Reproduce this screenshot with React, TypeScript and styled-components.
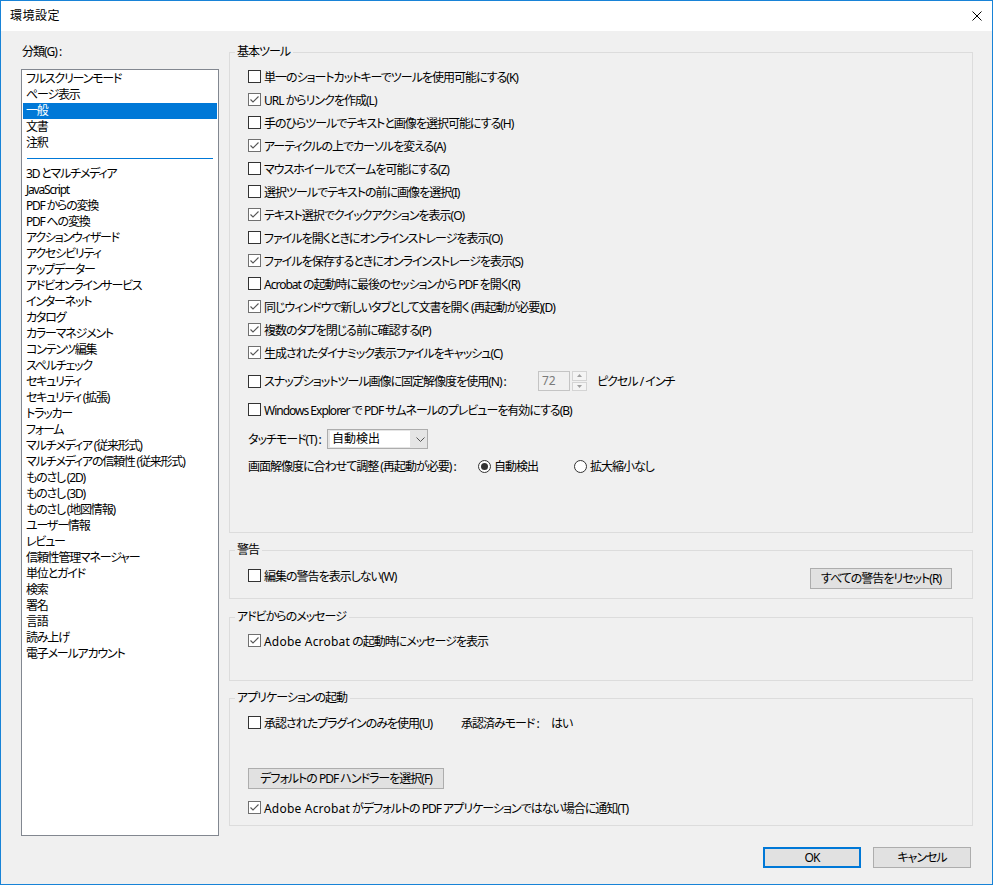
import React from "react";
import styled, { createGlobalStyle } from "styled-components";

const GlobalStyle = createGlobalStyle`
  html, body { margin: 0; padding: 0; background: #f0f0f0; }
  body {
    font-family: "Noto Sans", "Noto Sans CJK JP", sans-serif;
    font-size: 12px;
    letter-spacing: -1px;
    color: #000;
    font-feature-settings: "palt";
  }
  *, *::before, *::after { box-sizing: border-box; }
`;

const Frame = styled.div`
  width: 993px;
  height: 885px;
  border: 1px solid #1883d7;
  background: #f0f0f0;
  display: flex;
  flex-direction: column;
  overflow: hidden;
`;

const TitleBar = styled.header`
  height: 30px;
  flex: none;
  background: #fff;
  display: flex;
  align-items: center;
  justify-content: space-between;
  padding: 0 10px 0 9px;
`;

const Title = styled.h1`
  margin: 0;
  font-size: 12px;
  font-weight: normal;
  line-height: 16px;
  letter-spacing: 0.5px;
`;

const CloseButton = styled.button`
  width: 10px;
  height: 10px;
  padding: 0;
  border: 0;
  background: none;
  display: flex;
`;

const Body = styled.div`
  flex: 1;
  display: flex;
  flex-direction: column;
  padding: 13px 19px 16px 20px;
`;

const Main = styled.div`
  display: flex;
  gap: 10px;
`;

const LeftColumn = styled.div`
  width: 198px;
  flex: none;
  display: flex;
  flex-direction: column;
`;

const FieldLabel = styled.div`
  line-height: 16px;
  height: 16px;
  padding-left: 1px;
  margin-bottom: 9px;
`;

const ListBox = styled.ul`
  margin: 0;
  list-style: none;
  height: 767px;
  border: 1px solid #828790;
  background: #fff;
  padding: 1px;
`;

const ListItem = styled.li<{ $selected?: boolean }>`
  height: 16px;
  line-height: 16px;
  padding-left: 3px;
  white-space: nowrap;
  letter-spacing: -1.2px;
  background: ${(p) => (p.$selected ? "#0078d7" : "transparent")};
  color: ${(p) => (p.$selected ? "#fff" : "#000")};
`;

const ListSeparator = styled.li`
  height: 15px;
  padding: 7px 4px 0;
  &::after {
    content: "";
    display: block;
    height: 1px;
    background: #0078d7;
  }
`;

const RightColumn = styled.div`
  width: 744px;
  flex: none;
  display: flex;
  flex-direction: column;
`;

const Group = styled.fieldset<{ $gap?: number }>`
  margin: ${(p) => p.$gap ?? 0}px 0 0;
  padding: 0;
  border: 1px solid #dcdcdc;
  min-width: 0;
`;

const Legend = styled.legend`
  margin-left: 5px;
  padding: 0 3px 0 2px;
  height: 16px;
  line-height: 16px;
  font-size: 12px;
`;

const GroupBody = styled.div<{ $h: number; $pt: number }>`
  height: ${(p) => p.$h}px;
  padding: ${(p) => p.$pt}px 0 0 18px;
  display: flex;
  flex-direction: column;
`;

const Row = styled.div<{ $h?: number; $mt?: number }>`
  display: flex;
  align-items: center;
  height: ${(p) => p.$h ?? 23}px;
  margin-top: ${(p) => p.$mt ?? 0}px;
  white-space: nowrap;
`;

const SplitRow = styled.div`
  display: flex;
  justify-content: space-between;
  align-items: flex-start;
  padding-right: 20px;
`;

const CheckLabel = styled.label<{ $w?: number }>`
  display: flex;
  align-items: center;
  gap: 3px;
  height: 23px;
  white-space: nowrap;
  flex: none;
  width: ${(p) => (p.$w ? `${p.$w}px` : "auto")};
`;

const Box = styled.span<{ $checked: boolean }>`
  width: 13px;
  height: 13px;
  flex: none;
  border: 1px solid ${(p) => (p.$checked ? "#707070" : "#333")};
  background: #fff;
  display: flex;
`;

const Product = styled.span`
  letter-spacing: 0.2px;
`;

const RadioCircle = styled.span<{ $checked: boolean }>`
  width: 13px;
  height: 13px;
  flex: none;
  border-radius: 50%;
  border: 1px solid #333;
  background: #fff;
  display: flex;
  align-items: center;
  justify-content: center;
  &::after {
    content: "";
    width: 7px;
    height: 7px;
    border-radius: 50%;
    background: ${(p) => (p.$checked ? "#333" : "transparent")};
  }
`;

const RadioOption = styled.label<{ $w?: number }>`
  display: flex;
  align-items: center;
  gap: 3px;
  width: ${(p) => (p.$w ? `${p.$w}px` : "auto")};
`;

const FixedText = styled.span<{ $w: number }>`
  width: ${(p) => p.$w}px;
  flex: none;
`;

const SpinInput = styled.div`
  width: 32px;
  height: 20px;
  border: 1px solid #c4c4c4;
  background: #f0f0f0;
  color: #7a7a7a;
  padding-left: 3px;
  line-height: 18px;
  letter-spacing: 0;
`;

const SpinButtons = styled.div`
  margin-left: 2px;
  width: 15px;
  height: 20px;
  display: flex;
  flex-direction: column;
  gap: 1px;
`;

const SpinButton = styled.span`
  flex: 1;
  border: 1px solid #d4d4d4;
  background: #f4f4f4;
  display: flex;
  align-items: center;
  justify-content: center;
`;

const Unit = styled.span`
  margin-left: 10px;
`;

const Select = styled.div`
  width: 101px;
  height: 20px;
  border: 1px solid #adadad;
  background: #e5e5e5;
  display: flex;
  align-items: center;
  padding: 0 0 0 2px;
`;

const SelectValue = styled.span`
  width: 80px;
  height: 16px;
  line-height: 16px;
  background: #fff;
  padding-left: 2px;
  letter-spacing: 0;
`;

const Chevron = styled.svg`
  margin-left: 6px;
`;

const PushButton = styled.button<{ $w: number; $default?: boolean }>`
  width: ${(p) => p.$w}px;
  height: 21px;
  flex: none;
  font: inherit;
  font-size: 12px;
  letter-spacing: inherit;
  color: #000;
  background: #e1e1e1;
  border: ${(p) => (p.$default ? "2px solid #0078d7" : "1px solid #adadad")};
  padding: 0;
  line-height: 17px;
`;

const Footer = styled.div`
  margin-top: 11px;
  display: flex;
  justify-content: flex-end;
  gap: 12px;
  padding-right: 2px;
`;

function CheckBox({ checked, label, w }: { checked: boolean; label: React.ReactNode; w?: number }) {
  return (
    <CheckLabel $w={w}>
      <Box $checked={checked}>
        {checked && (
          <svg width="11" height="11" viewBox="0 0 11 11">
            <path d="M1.5 5.5 L4 8 L9.5 2.5" fill="none" stroke="#555" strokeWidth="1.1" />
          </svg>
        )}
      </Box>
      <span>{label}</span>
    </CheckLabel>
  );
}

const topItems = ["フルスクリーンモード", "ページ表示", "一般", "文書", "注釈"];
const otherItems = [
  "3D とマルチメディア",
  "JavaScript",
  "PDF からの変換",
  "PDF への変換",
  "アクションウィザード",
  "アクセシビリティ",
  "アップデーター",
  "アドビオンラインサービス",
  "インターネット",
  "カタログ",
  "カラーマネジメント",
  "コンテンツ編集",
  "スペルチェック",
  "セキュリティ",
  "セキュリティ (拡張)",
  "トラッカー",
  "フォーム",
  "マルチメディア (従来形式)",
  "マルチメディアの信頼性 (従来形式)",
  "ものさし (2D)",
  "ものさし (3D)",
  "ものさし (地図情報)",
  "ユーザー情報",
  "レビュー",
  "信頼性管理マネージャー",
  "単位とガイド",
  "検索",
  "署名",
  "言語",
  "読み上げ",
  "電子メールアカウント",
];

const basicTools: [string, boolean][] = [
  ["単一のショートカットキーでツールを使用可能にする(K)", false],
  ["URL からリンクを作成(L)", true],
  ["手のひらツールでテキストと画像を選択可能にする(H)", false],
  ["アーティクルの上でカーソルを変える(A)", true],
  ["マウスホイールでズームを可能にする(Z)", false],
  ["選択ツールでテキストの前に画像を選択(I)", false],
  ["テキスト選択でクイックアクションを表示(O)", true],
  ["ファイルを開くときにオンラインストレージを表示(O)", false],
  ["ファイルを保存するときにオンラインストレージを表示(S)", true],
  ["Acrobat の起動時に最後のセッションから PDF を開く(R)", false],
  ["同じウィンドウで新しいタブとして文書を開く (再起動が必要)(D)", true],
  ["複数のタブを閉じる前に確認する(P)", true],
  ["生成されたダイナミック表示ファイルをキャッシュ(C)", true],
];

export default function App() {
  return (
    <>
      <GlobalStyle />
      <Frame>
        <TitleBar>
          <Title>環境設定</Title>
          <CloseButton aria-label="閉じる">
            <svg width="10" height="10" viewBox="0 0 10 10">
              <path d="M0.5 0.5 L9.5 9.5 M9.5 0.5 L0.5 9.5" stroke="#000" strokeWidth="1" />
            </svg>
          </CloseButton>
        </TitleBar>
        <Body>
          <Main>
            <LeftColumn>
              <FieldLabel>分類(G) :</FieldLabel>
              <ListBox>
                {topItems.map((t) => (
                  <ListItem key={t} $selected={t === "一般"}>
                    {t}
                  </ListItem>
                ))}
                <ListSeparator />
                {otherItems.map((t) => (
                  <ListItem key={t}>{t}</ListItem>
                ))}
              </ListBox>
            </LeftColumn>
            <RightColumn>
              <Group>
                <Legend>基本ツール</Legend>
                <GroupBody $h={472} $pt={5}>
                  {basicTools.map(([label, checked]) => (
                    <Row key={label}>
                      <CheckBox checked={checked} label={label} />
                    </Row>
                  ))}
                  <Row $h={34}>
                    <CheckBox checked={false} label="スナップショットツール画像に固定解像度を使用(N) :" w={290} />
                    <SpinInput>72</SpinInput>
                    <SpinButtons>
                      <SpinButton>
                        <svg width="5" height="3" viewBox="0 0 5 3">
                          <path d="M0 3 L2.5 0 L5 3 Z" fill="#a0a0a0" />
                        </svg>
                      </SpinButton>
                      <SpinButton>
                        <svg width="5" height="3" viewBox="0 0 5 3">
                          <path d="M0 0 L2.5 3 L5 0 Z" fill="#a0a0a0" />
                        </svg>
                      </SpinButton>
                    </SpinButtons>
                    <Unit>ピクセル / インチ</Unit>
                  </Row>
                  <Row>
                    <CheckBox checked={false} label="Windows Explorer で PDF サムネールのプレビューを有効にする(B)" />
                  </Row>
                  <Row $h={36}>
                    <FixedText $w={79}>タッチモード(T) :</FixedText>
                    <Select>
                      <SelectValue>自動検出</SelectValue>
                      <Chevron width="9" height="5" viewBox="0 0 9 5">
                        <path d="M0.5 0.5 L4.5 4.5 L8.5 0.5" fill="none" stroke="#555" strokeWidth="1" />
                      </Chevron>
                    </Select>
                  </Row>
                  <Row $h={18}>
                    <FixedText $w={230}>画面解像度に合わせて調整 (再起動が必要) :</FixedText>
                    <RadioOption $w={96}>
                      <RadioCircle $checked />
                      <span>自動検出</span>
                    </RadioOption>
                    <RadioOption>
                      <RadioCircle $checked={false} />
                      <span>拡大縮小なし</span>
                    </RadioOption>
                  </Row>
                </GroupBody>
              </Group>

              <Group $gap={9}>
                <Legend>警告</Legend>
                <GroupBody $h={40} $pt={6}>
                  <SplitRow>
                    <CheckBox checked={false} label="編集の警告を表示しない(W)" />
                    <PushButton $w={142} style={{ marginTop: 4 }}>
                      すべての警告をリセット(R)
                    </PushButton>
                  </SplitRow>
                </GroupBody>
              </Group>

              <Group $gap={10}>
                <Legend>アドビからのメッセージ</Legend>
                <GroupBody $h={55} $pt={4}>
                  <Row>
                    <CheckBox
                      checked
                      label={
                        <>
                          <Product>Adobe Acrobat</Product> の起動時にメッセージを表示
                        </>
                      }
                    />
                  </Row>
                </GroupBody>
              </Group>

              <Group $gap={9}>
                <Legend>アプリケーションの起動</Legend>
                <GroupBody $h={119} $pt={5}>
                  <Row>
                    <CheckBox checked={false} label="承認されたプラグインのみを使用(U)" w={213} />
                    <FixedText $w={90}>承認済みモード :</FixedText>
                    <span>はい</span>
                  </Row>
                  <Row $h={21} $mt={34}>
                    <PushButton $w={196}>デフォルトの PDF ハンドラーを選択(F)</PushButton>
                  </Row>
                  <Row $mt={7}>
                    <CheckBox
                      checked
                      label={
                        <>
                          <Product>Adobe Acrobat</Product> がデフォルトの PDF アプリケーションではない場合に通知(T)
                        </>
                      }
                    />
                  </Row>
                </GroupBody>
              </Group>
            </RightColumn>
          </Main>
          <Footer>
            <PushButton $w={98} $default>
              OK
            </PushButton>
            <PushButton $w={98}>キャンセル</PushButton>
          </Footer>
        </Body>
      </Frame>
    </>
  );
}
